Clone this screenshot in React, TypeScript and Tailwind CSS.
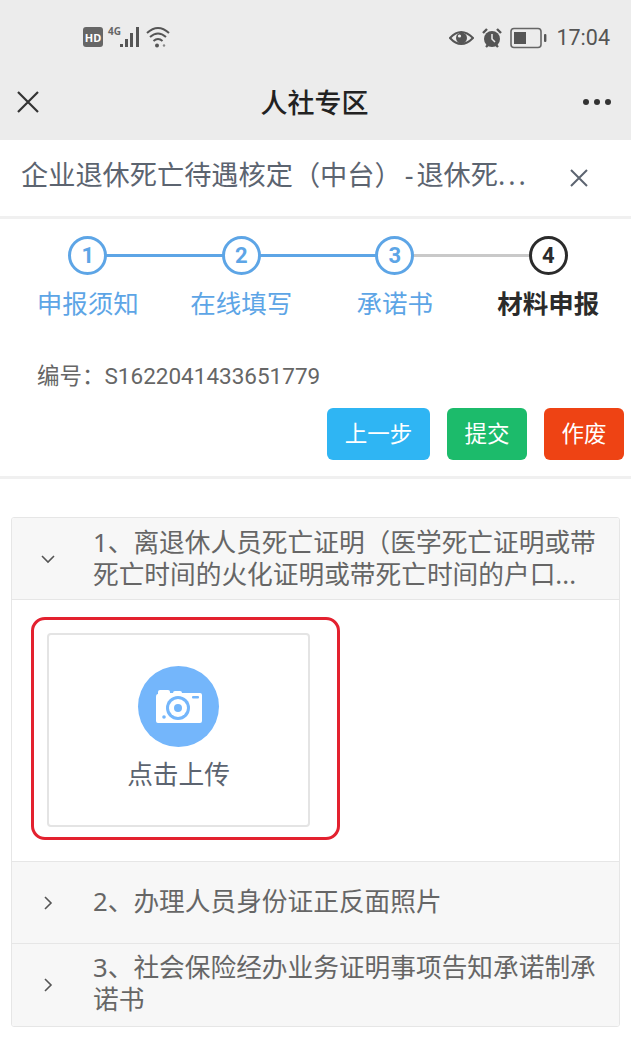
const FONT = "font-['Noto_Sans','Noto_Sans_CJK_SC',sans-serif]";

function Statusbar() {
  return (
    <div className="h-[69px] flex items-start pt-[24px] relative">
      <div className="ml-[83px] flex items-center h-[26px]">
        <span className="w-[20px] h-[20px] rounded-[3px] bg-[#666] text-white text-[11px] font-bold flex items-center justify-center leading-none">HD</span>
        <svg width="34" height="24" viewBox="0 0 34 24" className="ml-[5px] overflow-visible">
          <text x="0" y="10" fontSize="10" fontWeight="700" fill="#666">4G</text>
          <rect x="12" y="19" width="3" height="3" fill="#555" />
          <rect x="17" y="14" width="3" height="8" fill="#555" />
          <rect x="22" y="8" width="3" height="14" fill="#555" />
          <rect x="28" y="2" width="3" height="20" fill="#555" />
        </svg>
        <svg width="25" height="24" viewBox="0 0 25 24" className="ml-[4px]">
          <path d="M1 8 Q12 -2 23 8" fill="none" stroke="#555" strokeWidth="2" />
          <path d="M4 12 Q12 5 20 12" fill="none" stroke="#555" strokeWidth="2" />
          <path d="M7.5 16 Q12 12 16.5 16" fill="none" stroke="#555" strokeWidth="2" />
          <circle cx="11" cy="20.5" r="2" fill="#555" />
          <circle cx="18" cy="20.5" r="1.2" fill="#888" />
        </svg>
      </div>
      <div className="ml-auto mr-[21px] flex items-center h-[28px]">
        <svg width="25" height="18" viewBox="0 0 25 18">
          <path d="M1 9 Q12 -3 24 9 Q12 21 1 9Z" fill="none" stroke="#555" strokeWidth="2" />
          <circle cx="12.5" cy="9" r="5.5" fill="#555" />
          <circle cx="10.5" cy="7" r="1.6" fill="#ececec" />
        </svg>
        <svg width="22" height="22" viewBox="0 0 22 22" className="ml-[7px]">
          <circle cx="11" cy="12" r="8" fill="#555" />
          <path d="M2 6 L6 2 M20 6 L16 2 M5 20 L7 18 M17 20 L15 18" stroke="#555" strokeWidth="2.4" />
          <path d="M11 7 V12 L14 15" stroke="#ececec" strokeWidth="1.5" fill="none" />
        </svg>
        <svg width="37" height="22" viewBox="0 0 37 22" className="ml-[7px]">
          <rect x="1" y="1.5" width="30" height="19" rx="3" fill="none" stroke="#666" strokeWidth="1.6" />
          <rect x="4" y="5" width="12" height="12" fill="#555" />
          <rect x="34" y="7" width="2.4" height="8" rx="1" fill="#555" />
        </svg>
        <span className="ml-[9px] text-[21.5px] text-[#555] font-['Roboto',sans-serif] leading-none">17:04</span>
      </div>
    </div>
  );
}

function Titlebar() {
  return (
    <div className="h-[66px] flex items-center justify-between pl-[16px] pr-[20px] relative">
      <svg width="24" height="24" viewBox="0 0 24 24" stroke="#333" strokeWidth="2.2" fill="none">
        <path d="M2 2 L22 22 M22 2 L2 22" />
      </svg>
      <span className="absolute left-0 right-0 text-center text-[27px] leading-none text-[#222] font-medium pr-[2px]">人社专区</span>
      <div className="flex gap-[5px]">
        <span className="w-[6px] h-[6px] rounded-full bg-[#333]" />
        <span className="w-[6px] h-[6px] rounded-full bg-[#333]" />
        <span className="w-[6px] h-[6px] rounded-full bg-[#333]" />
      </div>
    </div>
  );
}

const steps = [
  { n: "1", t: "申报须知", done: true },
  { n: "2", t: "在线填写", done: true },
  { n: "3", t: "承诺书", done: true },
  { n: "4", t: "材料申报", done: false },
];

function Stepper() {
  return (
    <div className="grid grid-cols-4 pt-[17px] pl-[11px] pr-[6px] relative">
      {steps.map((s, i) => (
        <div key={s.n} className="flex flex-col items-center relative">
          {i < 3 && (
            <span className={`absolute top-[18px] left-1/2 w-full h-[3px] ${i < 2 ? "bg-[#5da5e6]" : "bg-[#c9c9c9]"}`} />
          )}
          <span
            className={`relative w-[39px] h-[39px] rounded-full border-[3px] bg-white flex items-center justify-center text-[22px] font-bold font-['Roboto',sans-serif] ${
              s.done ? "border-[#5da5e6] text-[#5da5e6]" : "border-[#2b2b2b] text-[#2b2b2b]"
            }`}
          >
            {s.n}
          </span>
          <span className={`mt-[10px] text-[25.5px] leading-[36px] whitespace-nowrap ${s.done ? "text-[#5da5e6]" : "text-[#2b2b2b] font-bold"}`}>
            {s.t}
          </span>
        </div>
      ))}
    </div>
  );
}

function Row({ icon, children, h, bottom }: { icon: "right" | "down"; children: React.ReactNode; h: string; bottom?: boolean }) {
  return (
    <div className={`${h} bg-[#f7f7f7] flex items-center ${bottom ? "border-b border-[#e6e6e6]" : ""}`}>
      <div className="w-[72px] flex justify-center shrink-0">
        <svg width="16" height="16" viewBox="0 0 16 16" fill="none" stroke="#555" strokeWidth="1.6">
          {icon === "down" ? <path d="M2 5 L8 11 L14 5" /> : <path d="M5 2 L11 8 L5 14" />}
        </svg>
      </div>
      <div className="ml-[9px] pr-[20px] text-[25.7px] leading-[32px] text-[#666] min-w-0 [text-spacing-trim:space-all]">{children}</div>
    </div>
  );
}

export default function App() {
  return (
    <div className={`w-[631px] h-[1050px] overflow-hidden bg-white ${FONT}`}>
      <div className="bg-[#ececec] h-[140px]">
        <Statusbar />
        <Titlebar />
      </div>
      <div className="h-[79px] border-b-[3px] border-[#f0f0f0] flex items-center pl-[21px] pr-[42px]">
        <span className="text-[27.2px] text-[#5c6470] w-[515px] whitespace-nowrap leading-none -mt-[6px] [text-spacing-trim:space-all]">
          企业退休死亡待遇核定（中台）<span className="mx-[3px]">-</span>退休死<span className="tracking-[3px]">...</span>
        </span>
        <svg width="20" height="20" viewBox="0 0 20 20" stroke="#5c6470" strokeWidth="2" fill="none" className="ml-auto">
          <path d="M2 2 L18 18 M18 2 L2 18" />
        </svg>
      </div>
      <Stepper />
      <div className="pl-[37px] mt-[39px] text-[22.5px] leading-[32px] text-[#666] font-['Roboto','Noto_Sans_CJK_SC',sans-serif]">编号：S1622041433651779</div>
      <div className="flex justify-end gap-[17px] pr-[7px] mt-[16px]">
        <span className="w-[103px] h-[52px] rounded-[6px] bg-[#2fb5f3] text-white text-[22.5px] flex items-center justify-center">上一步</span>
        <span className="w-[80px] h-[52px] rounded-[6px] bg-[#1cbb6b] text-white text-[22.5px] flex items-center justify-center">提交</span>
        <span className="w-[80px] h-[52px] rounded-[6px] bg-[#ee4314] text-white text-[22.5px] flex items-center justify-center">作废</span>
      </div>
      <div className="mt-[16px] border-t-[3px] border-[#f0f0f0]" />
      <div className="mx-[11px] mt-[38px] border border-[#e6e6e6] rounded-[3px] overflow-hidden">
        <Row icon="down" h="h-[82px]" bottom>
          <div className="whitespace-nowrap">1、离退休人员死亡证明（医学死亡证明或带</div>
          <div className="whitespace-nowrap">死亡时间的火化证明或带死亡时间的户口...</div>
        </Row>
        <div className="h-[262px] bg-white pl-[19px] pt-[17px] border-b border-[#e6e6e6]">
          <div className="w-[309px] h-[223px] rounded-[14px] border-[3px] border-[#e3212f] pl-[13px] pt-[13px]">
            <div className="w-[263px] h-[194px] rounded-[4px] border-2 border-[#e4e4e4] flex flex-col items-center pt-[31px]">
              <div className="w-[81px] h-[81px] rounded-full bg-[#74b6fb] flex items-center justify-center">
                <svg width="46" height="35" viewBox="0 0 46 35">
                  <path fill="#fff" d="M0 8 Q0 5 2 5 L2 3 Q2 1 4 1 L12 1 Q14 1 14 3 L14 4 L17 4 Q17 2 19 2 L24 2 Q26 2 26 4 L44 4 Q46 4 46 6 L46 32 Q46 34 44 34 L2 34 Q0 34 0 32 Z" />
                  <circle cx="22" cy="19" r="12" fill="#74b6fb" />
                  <circle cx="22" cy="19" r="9" fill="#fff" />
                  <circle cx="22" cy="19" r="4" fill="#74b6fb" />
                  <rect x="36" y="7" width="7" height="2.5" rx="1" fill="#74b6fb" />
                  <circle cx="8" cy="28" r="1.8" fill="#74b6fb" />
                </svg>
              </div>
              <span className="mt-[10px] text-[25.7px] leading-[36px] text-[#5c6470]">点击上传</span>
            </div>
          </div>
        </div>
        <Row icon="right" h="h-[82px]" bottom><div className="-mt-[2px]">2、办理人员身份证正反面照片</div></Row>
        <Row icon="right" h="h-[82px]">
          <div className="-mt-[2px]">3、社会保险经办业务证明事项告知承诺制承诺书</div>
        </Row>
      </div>
    </div>
  );
}
